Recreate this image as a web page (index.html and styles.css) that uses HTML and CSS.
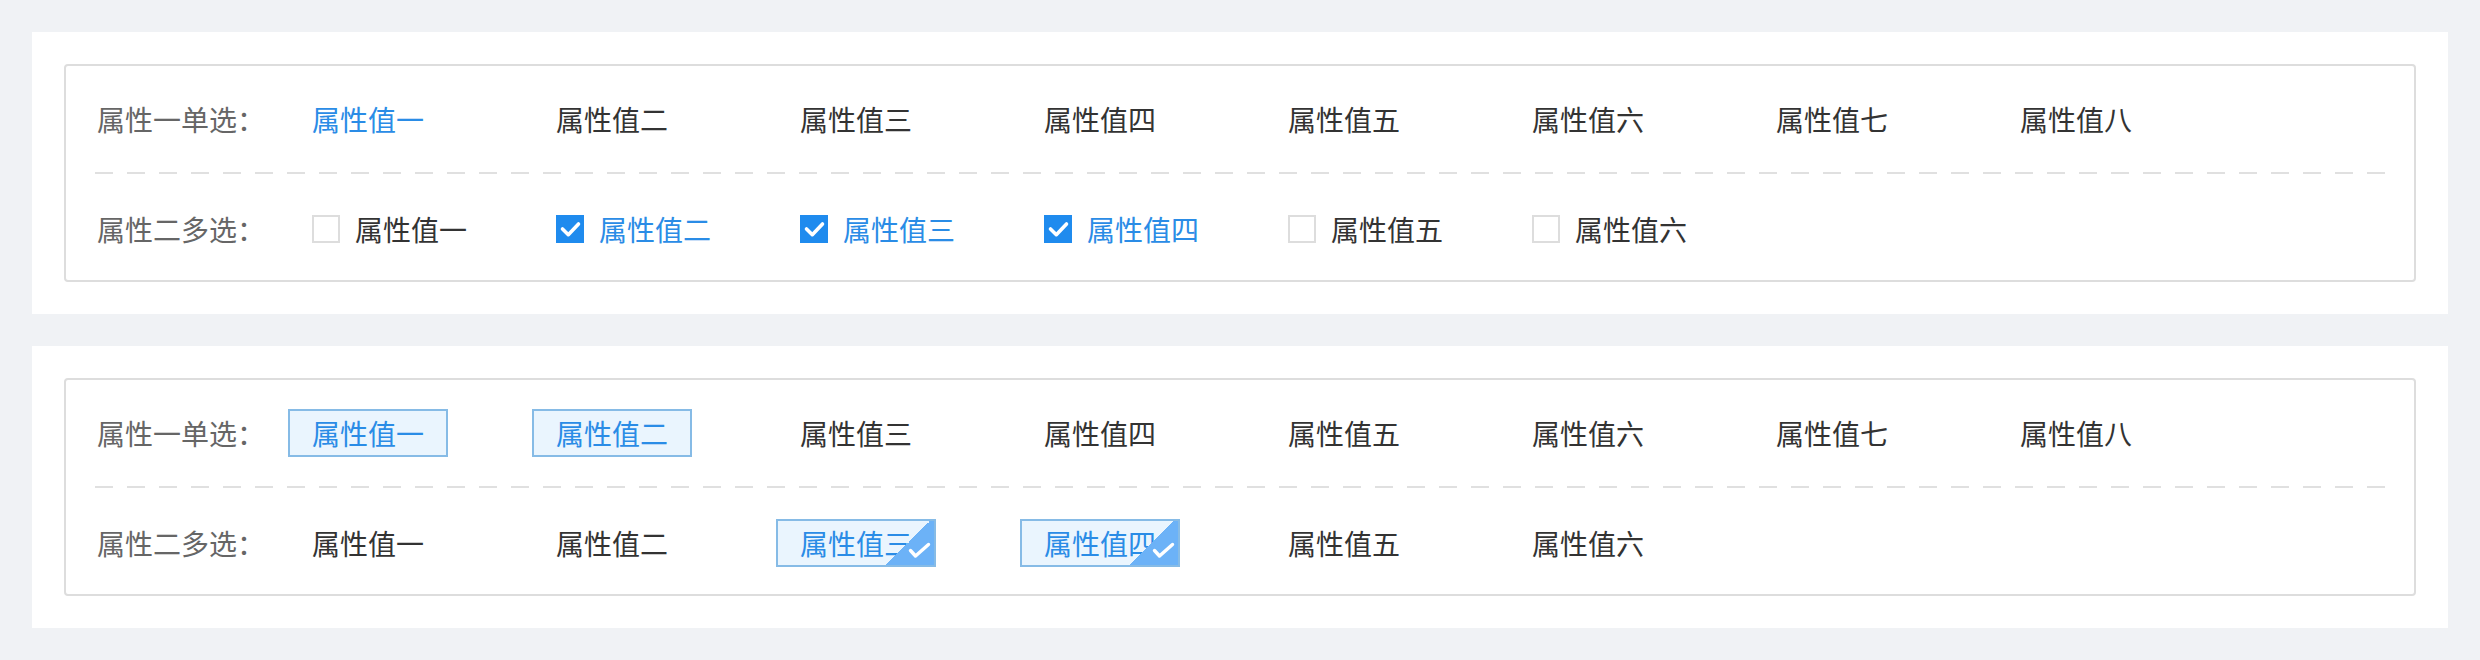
FILE: index.html
```html
<!DOCTYPE html>
<html lang="zh-CN">
<head>
<meta charset="utf-8">
<title>属性筛选</title>
<link rel="stylesheet" href="styles.css">
</head>
<body>
<div class="page">
  <section class="panel">
    <div class="filter">
      <div class="row">
        <div class="label">属性一单选：</div>
        <div class="options">
          <div class="opt"><span class="text active">属性值一</span></div>
          <div class="opt"><span class="text">属性值二</span></div>
          <div class="opt"><span class="text">属性值三</span></div>
          <div class="opt"><span class="text">属性值四</span></div>
          <div class="opt"><span class="text">属性值五</span></div>
          <div class="opt"><span class="text">属性值六</span></div>
          <div class="opt"><span class="text">属性值七</span></div>
          <div class="opt"><span class="text">属性值八</span></div>
        </div>
      </div>
      <div class="divider"></div>
      <div class="row row-second">
        <div class="label">属性二多选：</div>
        <div class="options">
          <div class="opt"><span class="box"></span><span class="text">属性值一</span></div>
          <div class="opt"><span class="box on"><svg viewBox="0 0 28 28" width="28" height="28"><polyline points="6.5,14 12.3,19.7 22.5,9" fill="none" stroke="#fff" stroke-width="3.6" stroke-linecap="round" stroke-linejoin="round"/></svg></span><span class="text active">属性值二</span></div>
          <div class="opt"><span class="box on"><svg viewBox="0 0 28 28" width="28" height="28"><polyline points="6.5,14 12.3,19.7 22.5,9" fill="none" stroke="#fff" stroke-width="3.6" stroke-linecap="round" stroke-linejoin="round"/></svg></span><span class="text active">属性值三</span></div>
          <div class="opt"><span class="box on"><svg viewBox="0 0 28 28" width="28" height="28"><polyline points="6.5,14 12.3,19.7 22.5,9" fill="none" stroke="#fff" stroke-width="3.6" stroke-linecap="round" stroke-linejoin="round"/></svg></span><span class="text active">属性值四</span></div>
          <div class="opt"><span class="box"></span><span class="text">属性值五</span></div>
          <div class="opt"><span class="box"></span><span class="text">属性值六</span></div>
        </div>
      </div>
    </div>
  </section>

  <section class="panel">
    <div class="filter">
      <div class="row">
        <div class="label">属性一单选：</div>
        <div class="options">
          <div class="opt opt-tag"><span class="tag">属性值一</span></div>
          <div class="opt opt-tag"><span class="tag">属性值二</span></div>
          <div class="opt"><span class="text">属性值三</span></div>
          <div class="opt"><span class="text">属性值四</span></div>
          <div class="opt"><span class="text">属性值五</span></div>
          <div class="opt"><span class="text">属性值六</span></div>
          <div class="opt"><span class="text">属性值七</span></div>
          <div class="opt"><span class="text">属性值八</span></div>
        </div>
      </div>
      <div class="divider"></div>
      <div class="row row-second">
        <div class="label">属性二多选：</div>
        <div class="options">
          <div class="opt"><span class="text">属性值一</span></div>
          <div class="opt"><span class="text">属性值二</span></div>
          <div class="opt opt-tag"><span class="tag tag-check">属性值三<span class="corner"><svg viewBox="0 0 48 48" width="48" height="48"><polyline points="24.5,33.5 29.5,39 42.5,27.5" fill="none" stroke="#fff" stroke-width="3.4" stroke-linecap="round" stroke-linejoin="round"/></svg></span></span></div>
          <div class="opt opt-tag"><span class="tag tag-check">属性值四<span class="corner"><svg viewBox="0 0 48 48" width="48" height="48"><polyline points="24.5,33.5 29.5,39 42.5,27.5" fill="none" stroke="#fff" stroke-width="3.4" stroke-linecap="round" stroke-linejoin="round"/></svg></span></span></div>
          <div class="opt"><span class="text">属性值五</span></div>
          <div class="opt"><span class="text">属性值六</span></div>
        </div>
      </div>
    </div>
  </section>
</div>
</body>
</html>
```

FILE: styles.css
```css
* {
  box-sizing: border-box;
}

html, body {
  margin: 0;
  padding: 0;
}

body {
  background: #f0f2f5;
  font-family: "Noto Sans CJK SC", "Noto Sans", sans-serif;
  font-size: 28px;
  color: #333333;
}

.page {
  display: flex;
  flex-direction: column;
  gap: 32px;
  padding: 32px;
}

.panel {
  background: #ffffff;
  padding: 32px;
}

.filter {
  border: 2px solid #dddddd;
  border-radius: 4px;
  padding: 0 29px;
}

.row {
  display: flex;
  align-items: center;
  height: 106px;
  padding-left: 2px;
}

.row-second {
  padding-top: 4px;
}

.label {
  width: 191px;
  flex: none;
  color: #666666;
  white-space: nowrap;
}

.options {
  display: flex;
  align-items: center;
}

.opt {
  width: 244px;
  flex: none;
  display: flex;
  align-items: center;
  padding-left: 24px;
  white-space: nowrap;
}

.opt-tag {
  padding-left: 0;
}

.text {
  color: #333333;
}

.text.active {
  color: #2a8ce6;
}

.divider {
  height: 2px;
  background: linear-gradient(to right, #e0e0e0 18px, transparent 18px) 0 0 / 32px 2px repeat-x;
}

.box {
  width: 28px;
  height: 28px;
  flex: none;
  border: 2px solid #dddddd;
  margin-right: 15px;
  display: flex;
}

.box.on {
  border: none;
  background: #1f8bee;
}

.box svg {
  display: block;
}

.tag {
  position: relative;
  width: 160px;
  height: 48px;
  border: 2px solid #86bbe6;
  background: #eaf5fe;
  color: #2a8ce6;
  display: flex;
  align-items: center;
  justify-content: center;
  overflow: hidden;
}

.corner {
  position: absolute;
  right: 0;
  bottom: 0;
  width: 48px;
  height: 48px;
  background: linear-gradient(to bottom right, transparent 50%, #6cb2f7 50%);
}

.corner svg {
  display: block;
}
```
